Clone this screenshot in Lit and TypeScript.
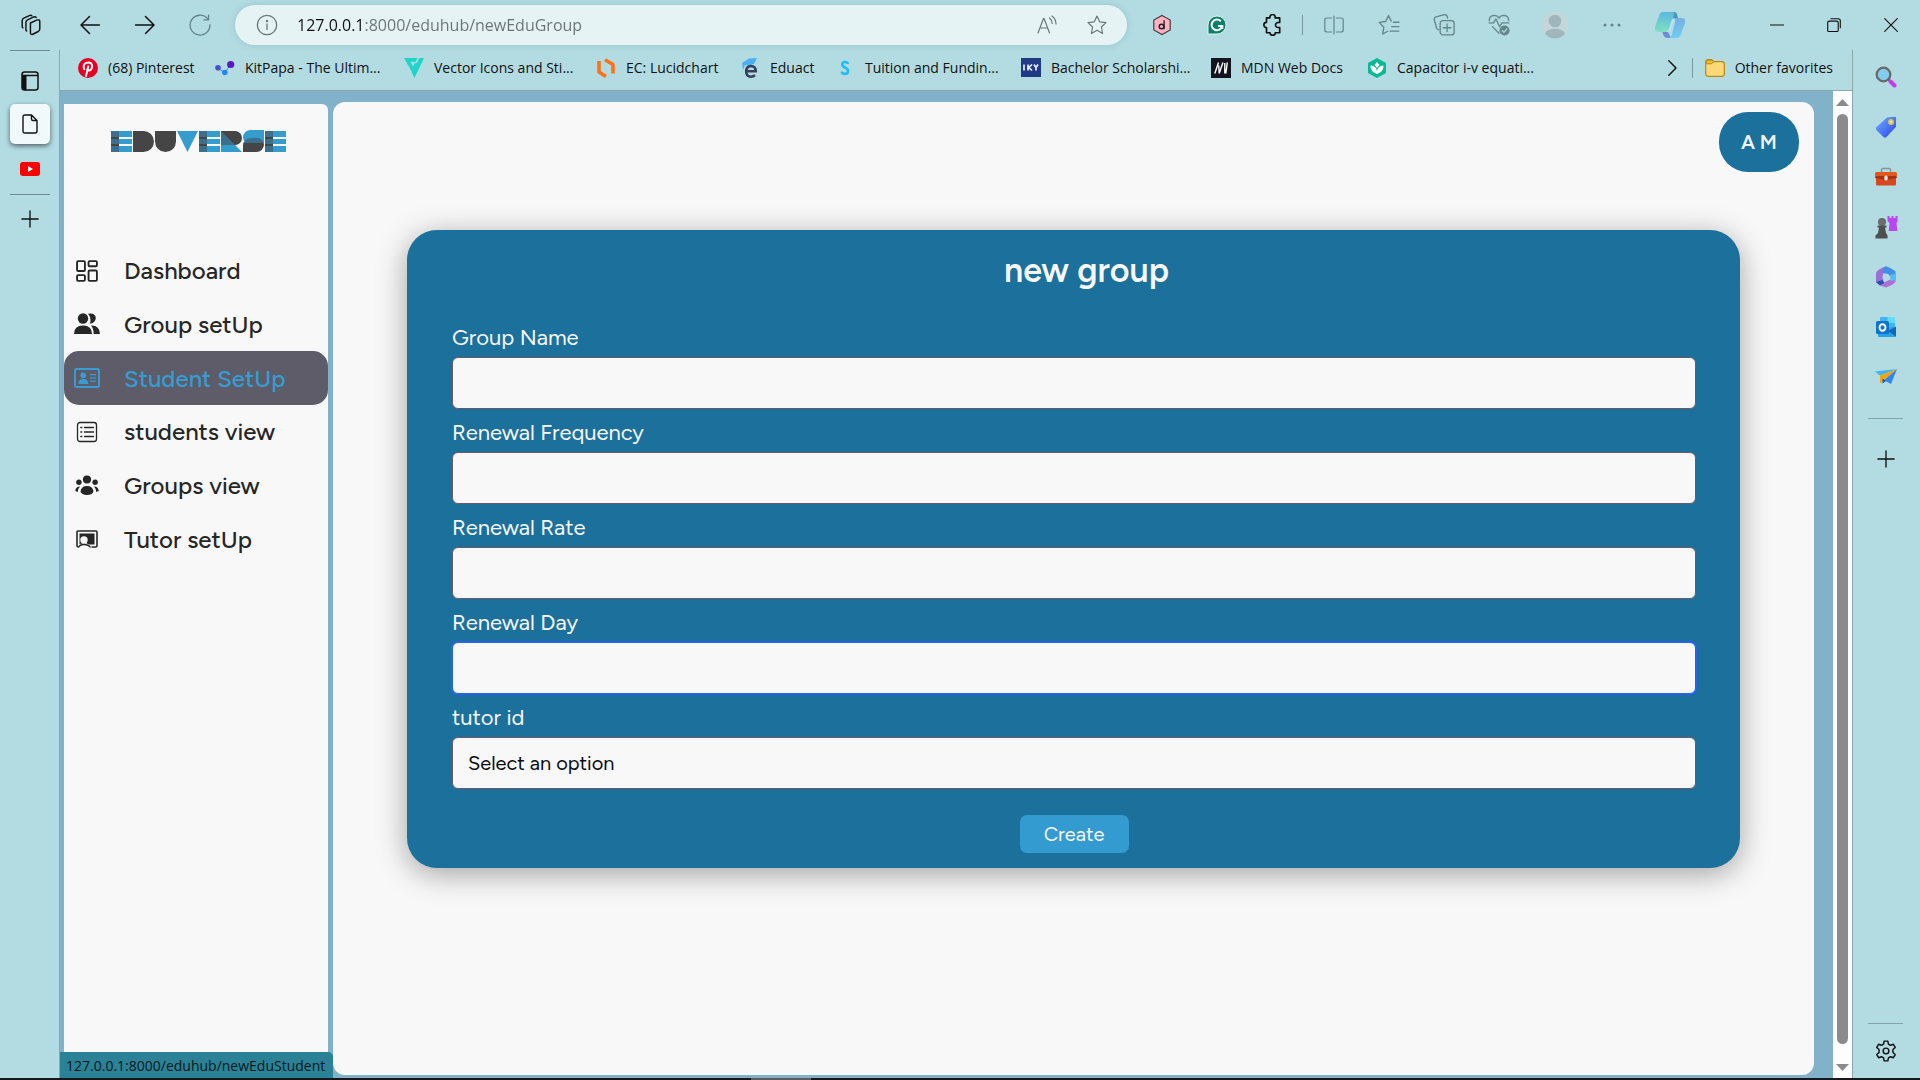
import { LitElement, html, css, svg } from "lit";
import { customElement, state } from "lit/decorators.js";
import { classMap } from "lit/directives/class-map.js";

const line = (size: number, body: unknown, width = 1.5, box = 20) => html`
  <svg width=${size} height=${size} viewBox="0 0 ${box} ${box}" fill="none" stroke="currentColor"
    stroke-width=${width} stroke-linecap="round" stroke-linejoin="round" aria-hidden="true">${body}</svg>`;
const solid = (size: number, body: unknown, box = 20) => html`
  <svg width=${size} height=${size} viewBox="0 0 ${box} ${box}" fill="currentColor" aria-hidden="true">${body}</svg>`;

const icons = {
  workspaces: line(22, svg`<path d="M9.500 8.200l5.600-2.600q2.900-.9 2.900 1.300v6.600q0 1.600-1.400 2.400l-5 2.500q-2.100.7-2.100-1.400zM6 15.500l-.6-.8V7.600q0-1.600 1.500-2.300l5.600-2.600q1.600-.6 2.200.5M2.600 12.600L2 11.800V6q0-1.600 1.500-2.300L8.500 1.400q1.500-.6 2.200.2"/>`, 1.3),
  back: line(20, svg`<path d="M19.500 10H1M9.500 1.500L1 10l8.500 8.500"/>`, 1.5),
  forward: line(20, svg`<path d="M.5 10H19M10.500 1.500L19 10l-8.500 8.500"/>`, 1.5),
  refresh: line(22, svg`<path d="M16.800 4.200A9 9 0 1 0 19 10M17.800 1v4.300h-4.300"/>`, 1.2),
  info: line(22, svg`<circle cx="10" cy="10" r="8.800"/><path d="M10 9v5"/><circle cx="10" cy="6.300" r=".5" fill="currentColor"/>`, 1.2),
  read: line(20, svg`<path d="M1 18L6.500 3.500h.6L12.500 18M3.200 13h7.200M12.500 3q2.600 2 2.700 5.500M15 1q4 3 4 8"/>`, 1.2),
  star: line(20, svg`<path d="M10 1l2.700 5.800 6.300.8-4.600 4.400 1.200 6.500L10 15.300 4.400 18.500 5.600 12 1 7.600l6.300-.8z"/>`, 1.2),
  puzzle: line(22, svg`<path d="M5 3.500h3.200a2.400 2.400 0 1 1 4.600 0H17v4.200h-1.500a2.300 2.300 0 1 0 0 4.600H17V17h-4a2.400 2.400 0 1 1-4.800 0H5v-4.600a2.400 2.400 0 1 1 0-4.800z"/>`, 1.5),
  split: line(20, svg`<path d="M7.500 3H3Q.8 3 .8 5v10q0 2 2.200 2h4.500M12.500 3H17q2.200 0 2.200 2v10q0 2-2.200 2h-4.500M10 1v18"/>`, 1.2),
  favorites: line(22, svg`<path d="M12 6.500L9.500 1.500 7 6.800l-6 .8 4.300 4.400-1 6.200 4.500-2.500M14 7.500h5M12.500 11.500H19M11 15.500h8"/>`, 1.2),
  collections: line(22, svg`<path d="M5 14.500q-1.500-.4-1.800-2L1.200 5.200Q.8 3.200 2.700 2.600l7.500-2q2.200-.4 2.800 1.800l.3 1.300"/><rect x="6.500" y="6" width="12.700" height="13" rx="2.500"/><path d="M12.800 9v7M9.300 12.500h7"/>`, 1.2),
  essentials: line(22, svg`<path d="M1 8h4l2.300-3.500 3.200 7L12.800 8H19M1.200 6Q1 1.500 5.500 1.200 8.500 1.200 10 3.700q1.500-2.500 4.500-2.500Q19 1.500 18.800 6M4 11.500l6 6"/><circle cx="15" cy="15" r="4.600" fill="#64858a" stroke="none"/><path d="M13 15.200l1.500 1.500 2.600-3" stroke="#b2dbe2"/>`, 1.2),
  dots: solid(20, svg`<circle cx="3" cy="10" r="1.500"/><circle cx="10" cy="10" r="1.500"/><circle cx="17" cy="10" r="1.500"/>`),
  minimize: line(14, svg`<path d="M0 10h20"/>`, 1.6),
  restore: line(14, svg`<rect x="1" y="4.500" width="15" height="15" rx="2"/><path d="M5.500 1H16q3 0 3 3v10"/>`, 1.6),
  close: line(14, svg`<path d="M1 1l18 18M19 1L1 19"/>`, 1.6),
  chevron: line(16, svg`<path d="M6 1l9 9-9 9"/>`, 1.8),
  plus: line(18, svg`<path d="M10 1v18M1 10h18"/>`, 1.5),
  pane: html`<svg width="18" height="20" viewBox="0 0 18 20" aria-hidden="true"><path d="M3.500 1h11Q17 1 17 3.500v13q0 2.500-2.500 2.500h-11Q1 19 1 16.500v-13Q1 1 3.500 1zM1 4.500h16" fill="none" stroke="#111" stroke-width="1.500"/><path d="M1 5h4.500v14H3Q1 19 1 16.500z" fill="#111"/></svg>`,
  file: html`<svg width="16" height="20" viewBox="0 0 16 20" fill="none" stroke="#111" stroke-width="1.400" stroke-linejoin="round" aria-hidden="true"><path d="M3 1h6.500L15 6.500V17q0 2-2 2H3q-2 0-2-2V3q0-2 2-2zM9.500 1v4q0 1.500 1.500 1.500h4"/></svg>`,
  youtube: html`<svg width="20" height="14" viewBox="0 0 20 14" aria-hidden="true"><rect width="20" height="14" rx="3" fill="#f00"/><path d="M8 4l5 3-5 3z" fill="#fff"/></svg>`,
  gear: line(22, svg`<path d="M8.300 1h3.400l.5 2.700 1.900 1.100 2.600-.9 1.700 2.900-2.100 1.800v2.800l2.100 1.800-1.700 2.900-2.600-.9-1.900 1.100-.5 2.700H8.300l-.5-2.700-1.900-1.100-2.600.9-1.700-2.900 2.100-1.800V8.600L1.600 6.800l1.700-2.900 2.600.9 1.900-1.100z"/><circle cx="10" cy="10" r="2.600"/>`, 1.3),
};

const art = {
  hexagon: html`<svg width="20" height="22" viewBox="0 0 20 22" aria-hidden="true"><path d="M10 1.500l8.200 4.500v10L10 20.500 1.800 16V6z" fill="#ffb3c1" stroke="#4a3a40" stroke-width="1.200"/><circle cx="9.500" cy="12.500" r="2.300" fill="none" stroke="#222" stroke-width="1.400"/><path d="M12.100 6.300v9" stroke="#222" stroke-width="1.400"/></svg>`,
  grammar: html`<svg width="20" height="20" viewBox="0 0 20 20" aria-hidden="true"><path d="M1 19V10a9 9 0 1 1 9 9z" fill="#0a806c" stroke="#dff0ec"/><path d="M13.800 6.300a5.300 5.300 0 1 0 1.300 4.700h-4m4.200 0v3" fill="none" stroke="#fff" stroke-width="2"/></svg>`,
  avatar: html`<svg width="28" height="28" viewBox="0 0 28 28" aria-hidden="true"><circle cx="14" cy="14" r="13.500" fill="#c3d6da"/><circle cx="14" cy="10" r="6.300" fill="#9fb7bc"/><path d="M4 22.800Q6 17.700 14 17.700t10 5.100q-4 4.700-10 4.700T4 22.800z" fill="#9fb7bc"/></svg>`,
  copilot: html`<svg width="30" height="28" viewBox="0 0 30 28" aria-hidden="true"><defs><linearGradient id="ca" x1="0" y1="0" x2="0" y2="1"><stop stop-color="#5cb8e0"/><stop offset="1" stop-color="#7fe0c4"/></linearGradient><linearGradient id="cb" x1="0" y1="0" x2="0" y2="1"><stop stop-color="#7aaee4"/><stop offset="1" stop-color="#6fcdf0"/></linearGradient></defs><path d="M16 1h3q3 0 3.500 4l.5 2-5 2z" fill="#4c95b8"/><path d="M7 19h5l4 8h-3q-4 0-5-4z" fill="#6f8bd6"/><path d="M8 1h9q3 0 2 3l-4 13q-1 4-5 4H4q-5 0-4-5L4 5q1-4 4-4z" fill="url(#ca)"/><path d="M20 7h6q5 0 4 5l-4 11q-1 4-5 4h-8q3 0 4-4l3-12q1-4 0-4z" fill="url(#cb)"/><path d="M20 7q-3 0-4 4l-2 7q-1 2.500-3.500 3H12q3 0 4-3l3-9q.5-1.500 1-2z" fill="#b9e4ee"/></svg>`,
  pinterest: html`<svg width="20" height="20" viewBox="0 0 20 20" aria-hidden="true"><circle cx="10" cy="10" r="10" fill="#e60023"/><path d="M8 18l2.300-9.500M6.300 11.200Q4.300 6.500 8.300 4.900q4.500-1.300 5.700 2 .5 4.500-2.500 5.600-1.800.4-2.300-1" fill="none" stroke="#fff" stroke-width="2" stroke-linecap="round"/></svg>`,
  kit: html`<svg width="20" height="20" viewBox="0 0 20 20" aria-hidden="true"><path d="M3 10l6.500 5L15.500 6.500" fill="none" stroke="#5a80e8" stroke-width="1"/><circle cx="3" cy="9.800" r="2.800" fill="#4a4ce0"/><circle cx="9.800" cy="14.500" r="2.800" fill="#2388f5"/><circle cx="15.700" cy="6.500" r="3.600" fill="#5a18c0"/></svg>`,
  vector: html`<svg width="20" height="20" viewBox="0 0 20 20" aria-hidden="true"><path d="M0 0h13.500l-1.800 3.800H6.500L9 8.500l2-3.500h2.500L8 14zM15.500 0H20L10.500 20 7.500 14z" fill="#1fd5c8"/></svg>`,
  lucid: html`<svg width="20" height="20" viewBox="0 0 20 20" fill="none" stroke="#fb7319" stroke-width="3.600" stroke-linejoin="round" aria-hidden="true"><path d="M3 3v11l7 4.500M9 1.800l8 4.700v9"/></svg>`,
  eduact: html`<svg width="20" height="20" viewBox="0 0 20 20" aria-hidden="true"><path d="M2 5l7-4.500L17 0l-3 6-6 1.500-3-.5-2 5z" fill="#4bb0f2"/><path d="M6.500 13.200h9.200q0-5.200-4.700-5.200-4.800.3-4.800 5.400 0 5 4.800 5.300 2.500 0 4-1.500" fill="none" stroke="#36405c" stroke-width="2.600"/></svg>`,
  tuition: html`<svg width="20" height="20" viewBox="0 0 20 20" aria-hidden="true"><path d="M13 6Q12.600 4 10 4T7.300 6.400Q7.300 8.400 10 9.500q3 1.300 3 3.700 0 2.600-3 2.600t-3.200-2.200" fill="none" stroke="#20bdf2" stroke-width="2.600"/></svg>`,
  iky: html`<svg width="20" height="20" viewBox="0 0 20 20" aria-hidden="true"><rect width="20" height="19" fill="#213a86"/><path d="M3 6.500v6M7 6.500v6M11 6.500L7.800 9.500l3.200 3M13 6.500l2 3 2-3M15 9.500v3" fill="none" stroke="#e8ecf7" stroke-width="1.700"/></svg>`,
  mdn: html`<svg width="20" height="20" viewBox="0 0 20 20" aria-hidden="true"><rect width="20" height="20" fill="#14141f"/><path d="M3.800 15.500l3.700-11M8.200 15.500l-.4-8M8.200 15.500l3.700-11M13.800 15.500V5M16.300 4.500l-1.500 11" fill="none" stroke="#fff" stroke-width="1.400"/></svg>`,
  leaf: html`<svg width="20" height="20" viewBox="0 0 20 20" aria-hidden="true"><path d="M10 0l9 5v10l-9 5-9-5V5z" fill="#09b894"/><path d="M10 4l2.500 3L10 10 7.500 7zM3.500 7.500q6 .5 6.500 6 .5-5.500 6.500-6 .5 6-6.500 8.500-7-2.500-6.500-8.500z" fill="#fff"/></svg>`,
  folder: html`<svg width="20" height="18" viewBox="0 0 20 18" aria-hidden="true"><path d="M.7 3Q.7.7 3 .7h3.500l2.300 2h8Q19.300 2.700 19.300 5v9.800q0 2.500-2.500 2.500H3.200Q.7 17.300.7 14.800z" fill="#ffd978" stroke="#b98a12" stroke-width="1.200"/><path d="M1.200 4.800h5.500l2-2-2-1.600H2.800Q1.200 1.400 1.200 3z" fill="#f2b92c" stroke="#b98a12"/></svg>`,
  search: html`<svg width="22" height="22" viewBox="0 0 22 22" aria-hidden="true"><path d="M13 13l3 3" stroke="#65696d" stroke-width="2.400"/><path d="M15.500 15.500l4 4" stroke="#c63af0" stroke-width="4" stroke-linecap="round"/><circle cx="8.500" cy="8.500" r="6.800" fill="#86cbea" stroke="#65696d" stroke-width="2.200"/></svg>`,
  tag: html`<svg width="22" height="22" viewBox="0 0 22 22" aria-hidden="true"><defs><linearGradient id="tg" x1="0" y1="0" x2="1" y2="1"><stop stop-color="#6db5fb"/><stop offset="1" stop-color="#2d3df0"/></linearGradient></defs><path d="M12 1.500L20 .8q1 0 1 1v9L11.500 21q-1.500 1-3 0L1.300 14q-1-1.500 0-2.700z" fill="url(#tg)"/><circle cx="16" cy="6" r="2.200" fill="#bfe0ff" stroke="#eac433" stroke-width="1.500"/></svg>`,
  toolbox: html`<svg width="24" height="20" viewBox="0 0 24 20" aria-hidden="true"><path d="M7.500 6V3q0-1.500 1.500-1.500h6Q16.500 1.500 16.500 3v3" fill="none" stroke="#8a9499" stroke-width="1.500"/><rect x="2" y="9" width="20" height="9.500" rx="1" fill="#d9481c"/><path d="M2.500 5h19l1.500 6-8 1.500H9L1 11z" fill="#a92f0e"/><rect x="1" y="5" width="22" height="4" rx="1.500" fill="#e2571f"/><rect x="10.300" y="8.500" width="3.400" height="5" rx="1.500" fill="#dfe6ea"/></svg>`,
  chess: html`<svg width="24" height="24" viewBox="0 0 24 24" aria-hidden="true"><path d="M13.500 1v5l2 2-.8 8h8.600l-.8-8 1-2V1h-2v2h-2V1h-2v2h-2V1z" fill="#bb45f5"/><circle cx="8" cy="7" r="4" fill="#6a6a6a"/><path d="M3.500 10.500h9v2H11L12 18l1.500 2.500v3h-12v-3L4 18l1-5.500H3.500z" fill="#4d4f50"/></svg>`,
  office: html`<svg width="22" height="22" viewBox="0 0 22 22" aria-hidden="true"><path d="M8 1.500L11 .3q7 2.700 9.500 5.200.7 4-.2 7L14 9.500 8 7z" fill="#3f8fe8"/><path d="M8 1.500Q2 4 1 7v9l4 3.500L8 15z" fill="#9a6fd6"/><path d="M5 19.500l6 2q6.500-2.500 9.500-5.500v-4L14 14l-6 3z" fill="#b06fd8"/><path d="M1 16l6.500-2 2 3L5 19.500z" fill="#2f4fae"/><path d="M15 9l6-2v7l-5.500 1z" fill="#55bdf3"/><circle cx="11" cy="11" r="3.500" fill="#b2dbe2"/></svg>`,
  outlook: html`<svg width="22" height="22" viewBox="0 0 22 22" aria-hidden="true"><rect x="5" y="1" width="15" height="12" rx="1" fill="#3fb5f0"/><rect x="12.500" y="1" width="7.500" height="6" fill="#63dcfb"/><path d="M3 20V12l18-1v9q0 1-1 1H4q-1 0-1-1z" fill="#2aa1e6"/><path d="M13 15l8-4.500v10z" fill="#1168b4"/><rect x="1" y="5" width="13" height="13" rx="1.500" fill="#0c74ce"/><ellipse cx="7.500" cy="11.500" rx="3" ry="3.300" fill="none" stroke="#fff" stroke-width="1.900"/></svg>`,
  plane: html`<svg width="22" height="18" viewBox="0 0 22 18" aria-hidden="true"><path d="M0 3.500L22 1 5 7.500z" fill="#3fb4f2"/><path d="M22 1L5 7.500v8L9 12z" fill="#f5a50c"/><path d="M22 1l-6 15-7-3.800z" fill="#3385ee"/><path d="M7.500 10.500v5L11 13z" fill="#1b53b8"/></svg>`,
};

const nav = [
  { label: "Dashboard", icon: line(24, svg`<rect x="2" y="2" width="7.500" height="9.500" rx="1"/><rect x="13" y="2" width="8" height="5" rx="1"/><rect x="2" y="15.500" width="7.500" height="5.500" rx="1"/><rect x="13" y="11" width="8" height="10" rx="1"/>`, 1.8, 23) },
  { label: "Group setUp", icon: solid(26, svg`<circle cx="9" cy="7.500" r="5.200"/><path d="M0 23q0-8.500 9-8.500t9 8.500zM14 2.800q6-1.500 7.700 3 .8 6-5.700 6.900 1.800-5.700-2-9.900zM17 14.500q8.500-.5 9 8.500h-6.300q0-5.500-2.700-8.500z"/>`, 26) },
  { label: "Student SetUp", icon: html`<svg width="26" height="20" viewBox="0 0 26 20" fill="currentColor" aria-hidden="true"><rect x="1" y="1" width="24" height="18" rx="1.500" fill="none" stroke="currentColor" stroke-width="2"/><circle cx="9.300" cy="7.300" r="2.900"/><path d="M4.300 16q0-5 5-5t5 5zM16 6h6v1.300h-6zM16 9.300h6v1.300h-6zM16 12.500h6v1.300h-6z"/></svg>` },
  { label: "students view", icon: line(22, svg`<rect x="1.500" y="1.500" width="19" height="19" rx="2.500"/><path d="M8.500 6.500h9M8.500 11h9M8.500 15.500h9M4.800 6.500h1M4.800 11h1M4.800 15.500h1"/>`, 1.3, 22) },
  { label: "Groups view", icon: solid(24, svg`<circle cx="12" cy="6.500" r="4.100"/><circle cx="3.900" cy="9.200" r="2.700"/><circle cx="20.100" cy="9.200" r="2.700"/><path d="M5.500 18.600q.5-5.600 6.500-5.600t6.500 5.600q-1 3.400-6.500 3.400t-6.500-3.400zM.3 18q0-4.500 4.700-4.600-2 2-2.300 5.600zM23.700 18q0-4.500-4.700-4.600 2 2 2.300 5.600z"/>`, 24) },
  { label: "Tutor setUp", icon: html`<svg width="22" height="18" viewBox="0 0 22 18" aria-hidden="true"><path d="M2.500 17q-1.500 0-1.500-1V2q0-1 1-1h18q1 0 1 1v14q0 1-1.500 1h-4" fill="none" stroke="currentColor" stroke-width="1.600"/><path d="M3.500 3.500h15v11h-5.500l-3-1.500-6.500 1z" fill="currentColor"/><circle cx="8" cy="10" r="3.700" fill="#f8f8f8"/><path d="M2.500 17.500q1-3 5.500-3t6.500 3" fill="#f8f8f8" stroke="currentColor" stroke-width="1.300"/></svg>` },
];

const bookmarks = [
  { icon: art.pinterest, label: "(68) Pinterest" },
  { icon: art.kit, label: "KitPapa - The Ultim..." },
  { icon: art.vector, label: "Vector Icons and Sti..." },
  { icon: art.lucid, label: "EC: Lucidchart" },
  { icon: art.eduact, label: "Eduact" },
  { icon: art.tuition, label: "Tuition and Fundin..." },
  { icon: art.iky, label: "Bachelor Scholarshi..." },
  { icon: art.mdn, label: "MDN Web Docs" },
  { icon: art.leaf, label: "Capacitor i-v equati..." },
];

const fields = [
  { id: "name", label: "Group Name" },
  { id: "frequency", label: "Renewal Frequency" },
  { id: "rate", label: "Renewal Rate" },
  { id: "day", label: "Renewal Day" },
];

@customElement("edu-logo")
export class EduLogo extends LitElement {
  static styles = css`
    :host { display: flex; gap: 1px; --ink: #454545; --sky: #349dce; --mix: #3c6f8b; }
    .tile { width: 21px; height: 21px; position: relative; }
    .bars {
      background:
        linear-gradient(var(--mix) 6px, var(--ink) 6px 8px, var(--mix) 8px 13px, var(--ink) 13px 15px, var(--mix) 15px) left / 8px 100% no-repeat,
        linear-gradient(var(--sky) 6px, transparent 6px 8px, var(--sky) 8px 13px, transparent 13px 15px, var(--sky) 15px);
    }
    .half { background: var(--ink); border-radius: 0 11px 11px 0; }
    .cup { background: var(--ink); border-radius: 0 0 11px 11px; }
    .wedge { background: var(--sky); clip-path: polygon(0 0, 100% 0, 50% 100%); }
    .flag::before { content: ""; position: absolute; inset: 0 0 7px 0; background: var(--ink); border-radius: 0 7px 7px 0; }
    .flag::after { content: ""; position: absolute; inset: 0; background: linear-gradient(var(--mix) 14px, var(--sky) 14px); clip-path: polygon(0 0, 100% 100%, 0 100%); }
    .wave::before { content: ""; position: absolute; inset: -1px 0 9px 0; background: var(--sky); border-radius: 12px 0 0 9px; }
    .wave::after { content: ""; position: absolute; inset: 7px 0 0 0; background: linear-gradient(var(--mix) 5px, var(--ink) 5px); border-radius: 9px 8px 9px 0; }
  `;
  render() {
    return ["bars", "half", "cup", "wedge", "bars", "flag", "wave", "bars"].map((s) => html`<span class="tile ${s}"></span>`);
  }
}

@customElement("group-form")
export class GroupForm extends LitElement {
  static styles = css`
    :host { display: block; }
    .card {
      background: #1b709c; color: #f8f8f8; border-radius: 30px;
      padding: 17px 44px 15px 45px; box-shadow: 0 6px 30px rgba(0, 0, 0, 0.35);
      display: flex; flex-direction: column;
    }
    h1 { margin: 0 0 25px; padding-left: 25px; font-size: 34px; line-height: 48px; font-weight: 600; text-align: center; }
    label { font-size: 22px; line-height: 35px; height: 37px; }
    .field { display: flex; flex-direction: column; margin-bottom: 6px; }
    input, select {
      box-sizing: border-box; width: 100%; height: 52px; margin: 0; padding: 0 15px;
      font: inherit; font-size: 20px; color: #0c0c14; background: #f8f8f8;
      border: 1px solid #6b5a66; border-radius: 6px; appearance: none; outline: none;
    }
    .active { border-color: #2563eb; box-shadow: 0 0 0 1px #2563eb; }
    button {
      align-self: center; margin-top: 20px; width: 109px; height: 38px; padding: 0; border: 0; border-radius: 7px;
      background: #349bd0; color: #f8f8f8; font: inherit; font-size: 20px;
    }
  `;
  @state() private active = "day";
  render() {
    return html`<form class="card" @submit=${(e: Event) => e.preventDefault()}>
      <h1>new group</h1>
      ${fields.map((f) => html`<div class="field">
        <label for=${f.id}>${f.label}</label>
        <input id=${f.id} type="text" class=${classMap({ active: this.active === f.id })} @focus=${() => (this.active = f.id)} />
      </div>`)}
      <div class="field">
        <label for="tutor">tutor id</label>
        <select id="tutor" @focus=${() => (this.active = "")}><option>Select an option</option></select>
      </div>
      <button type="submit">Create</button>
    </form>`;
  }
}

@customElement("app-root")
export class AppRoot extends LitElement {
  static styles = css`
    :host { display: block; font-family: "Open Sans", "Noto Sans", sans-serif; --chrome: #b2dbe2; --rule: #8aa7ac; color: #111; }
    * { box-sizing: border-box; }
    svg { display: block; flex: none; }
    button { border: 0; padding: 0; background: none; color: inherit; font: inherit; display: flex; align-items: center; justify-content: center; }
    a { color: inherit; text-decoration: none; }
    .window { min-height: 100vh; display: grid; grid-template-rows: 50px 1fr 2px; background: var(--chrome); }
    .toolbar { display: flex; align-items: center; padding-right: 1px; }
    .tool { width: 55px; height: 50px; }
    .wide { width: 62px; }
    .muted { color: #64858a; }
    .profile { width: 58px; }
    .caption { width: 57px; height: 50px; }
    .captions { display: flex; margin-left: 47px; }
    .address {
      flex: 1; height: 40px; margin: 0 7px 0 8px; border-radius: 20px; background: #e5f3f4; color: #6d7779;
      display: flex; align-items: center; padding: 0 5px 0 21px; box-shadow: 0 0 6px rgba(70, 130, 145, 0.25);
    }
    .address button { width: 50px; height: 40px; }
    .address .site { width: 22px; margin-right: 19px; }
    .url {
      flex: 1; min-width: 0; border: 0; outline: none; padding: 0; height: 30px; font: inherit; font-size: 16px;
      color: transparent; background: linear-gradient(90deg, #111 68px, #6a7274 68px); -webkit-background-clip: text; background-clip: text;
    }
    .bar { width: 1px; height: 20px; margin: 0 3px; background: #7b999e; }
    .body { display: flex; min-height: 0; }
    .tabs { width: 60px; border-right: 1px solid var(--rule); display: flex; flex-direction: column; align-items: center; }
    .tabs hr, .side hr { width: 40px; height: 1px; border: 0; margin: 0; background: #6d8b90; }
    .tab { width: 40px; height: 40px; }
    .tabs .first { margin: 10px 0 4px; height: 39px; }
    .tabs .open { background: #f2f9fb; border-radius: 5px; box-shadow: 0 2px 5px rgba(0, 0, 0, 0.55); margin-bottom: 5px; }
    .tabs .second { margin-bottom: 5px; }
    .tabs .new { margin-top: 4px; }
    .center { flex: 1; min-width: 0; display: flex; flex-direction: column; }
    .favorites { height: 41px; border-bottom: 1px solid #8ba8ae; display: flex; align-items: center; padding: 0 19px 4px 18px; font-size: 14px; }
    .list { display: grid; grid-template-columns: 117px 169px 172px 124px 75px 166px 170px 136px 170px; gap: 20px; margin: 0; padding: 0; list-style: none; }
    .favorites a { display: flex; align-items: center; gap: 10px; white-space: nowrap; line-height: 20px; }
    .more { margin-left: auto; width: 30px; height: 30px; }
    .favorites .bar { margin: 0 12px 0 5px; }
    .view { flex: 1; display: flex; position: relative; }
    .page {
      flex: 1; min-width: 0; display: flex; gap: 5px; background: #82b1ca; padding: 11px 19px 3px 4px;
      font-family: Figtree, "Inter", "Lato", sans-serif;
    }
    .menu { width: 264px; margin: 2px 0 -3px; background: #f8f8f8; border-radius: 0 6px 0 0; }
    edu-logo { margin: 27px 0 92px 47px; }
    .links { display: grid; grid-auto-rows: 1fr; height: 322px; }
    .links a { display: flex; align-items: center; font-size: 24px; font-weight: 500; color: #262626; border-radius: 15px; padding-left: 6px; }
    .links .glyph { width: 34px; margin-right: 20px; display: flex; justify-content: center; }
    .links .selected { background: #5d5c68; color: #369cd2; }
    main { flex: 1; min-width: 0; background: #f8f8f8; border-radius: 12px; padding: 10px 15px 10px 74px; display: flex; flex-direction: column; }
    .user { align-self: flex-end; width: 80px; height: 60px; border-radius: 29px; background: #1b709c; color: #f0f8fc; font-size: 20px; font-weight: 600; }
    group-form { margin: 58px 59px 0 0; }
    .scroll { width: 19px; background: #fdfdfd; display: flex; flex-direction: column; align-items: center; padding: 8px 0 7px; color: #8b8b8b; }
    .thumb { flex: 1; width: 11px; border-radius: 6px; background: #8b8b8b; margin: 8px 0 20px; }
    .status { position: absolute; left: 0; bottom: 0; height: 26px; width: 273px; padding-left: 6px; line-height: 28px; font-size: 14px; background: #2b8297; color: #08181c; border-radius: 0 5px 0 0; white-space: nowrap; }
    .side { width: 68px; border-left: 1px solid var(--rule); display: flex; flex-direction: column; align-items: center; padding: 2px 2px 0 0; }
    .app { width: 50px; height: 50px; }
    .side hr { width: 35px; background: #84a3a8; margin: 16px 0 15px; }
    .side .foot { margin: auto 0 7px; }
    .side .settings { height: 40px; margin-bottom: 7px; }
    .edge { background: #14171c; display: flex; justify-content: center; }
    .edge span { width: 60px; background: #5a5d62; margin-right: 358px; }
  `;
  render() {
    const tool = (label: string, icon: unknown, cls = "") => html`<button class="tool ${cls}" aria-label=${label}>${icon}</button>`;
    return html`<div class="window">
      <header class="toolbar">
        ${tool("Workspaces", icons.workspaces, "wide")} ${tool("Back", icons.back)} ${tool("Forward", icons.forward)} ${tool("Refresh", icons.refresh, "muted")}
        <div class="address">
          <button class="site" aria-label="Site information">${icons.info}</button>
          <input class="url" type="text" aria-label="Address" .value=${"127.0.0.1:8000/eduhub/newEduGroup"} />
          <button aria-label="Read aloud">${icons.read}</button>
          <button aria-label="Add to favorites">${icons.star}</button>
        </div>
        ${tool("Dictionary", art.hexagon)} ${tool("Writing assistant", art.grammar)} ${tool("Extensions", icons.puzzle)}
        <span class="bar"></span>
        ${tool("Split screen", icons.split, "muted")} ${tool("Favorites", icons.favorites, "muted")} ${tool("Collections", icons.collections, "muted")}
        ${tool("Browser essentials", icons.essentials, "muted")} ${tool("Profile", art.avatar, "profile")} ${tool("Settings and more", icons.dots, "muted")} ${tool("Copilot", art.copilot, "wide")}
        <div class="captions">
          <button class="caption" aria-label="Minimize">${icons.minimize}</button>
          <button class="caption" aria-label="Restore">${icons.restore}</button>
          <button class="caption" aria-label="Close">${icons.close}</button>
        </div>
      </header>
      <div class="body">
        <aside class="tabs">
          <hr />
          <button class="tab first" aria-label="Tab actions">${icons.pane}</button>
          <button class="tab open" aria-label="Current tab">${icons.file}</button>
          <button class="tab second" aria-label="YouTube">${icons.youtube}</button>
          <hr />
          <button class="tab new" aria-label="New tab">${icons.plus}</button>
        </aside>
        <div class="center">
          <div class="favorites">
            <ul class="list">${bookmarks.map((b) => html`<li><a href="#">${b.icon}<span>${b.label}</span></a></li>`)}</ul>
            <button class="more" aria-label="More favorites">${icons.chevron}</button>
            <span class="bar"></span>
            <a href="#">${art.folder}<span>Other favorites</span></a>
          </div>
          <div class="view">
            <div class="page">
              <nav class="menu">
                <edu-logo role="img" aria-label="Eduverse"></edu-logo>
                <div class="links">
                  ${nav.map((n) => html`<a href="#" class=${classMap({ selected: n.label === "Student SetUp" })}><span class="glyph">${n.icon}</span>${n.label}</a>`)}
                </div>
              </nav>
              <main>
                <button class="user">A M</button>
                <group-form></group-form>
              </main>
            </div>
            <div class="scroll">
              <svg width="13" height="7" viewBox="0 0 13 7" fill="currentColor" aria-hidden="true"><path d="M0 7L6.500 0 13 7z" /></svg>
              <span class="thumb"></span>
              <svg width="13" height="7" viewBox="0 0 13 7" fill="currentColor" aria-hidden="true"><path d="M0 0h13L6.500 7z" /></svg>
            </div>
            <div class="status">127.0.0.1:8000/eduhub/newEduStudent</div>
          </div>
        </div>
        <aside class="side">
          ${[["Search", art.search], ["Shopping", art.tag], ["Tools", art.toolbox], ["Games", art.chess], ["Microsoft 365", art.office], ["Outlook", art.outlook], ["Drop", art.plane]].map(
            ([label, icon]) => html`<button class="app" aria-label=${label}>${icon}</button>`
          )}
          <hr />
          <button class="app" aria-label="Customize">${icons.plus}</button>
          <hr class="foot" />
          <button class="app settings" aria-label="Settings">${icons.gear}</button>
        </aside>
      </div>
      <div class="edge"><span></span></div>
    </div>`;
  }
}
